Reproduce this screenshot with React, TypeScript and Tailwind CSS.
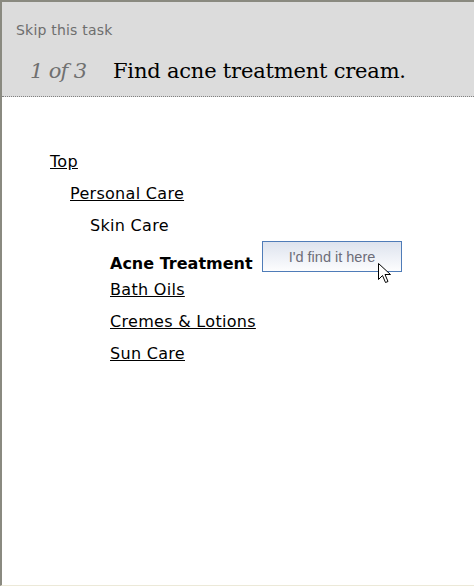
import React from 'react';

const verdana = { fontFamily: '"DejaVu Sans", Verdana, sans-serif' };

function Cursor() {
  return (
    <svg width="13" height="21" viewBox="0 0 13 21" className="absolute left-[115px] top-[21px]">
      <path d="M0.5 0.5 L0.5 16.5 L4.5 12.5 L7.5 19.5 L10 18.5 L7 11.5 L12.5 11.5 Z" fill="#fff" stroke="#000" strokeWidth="1" strokeLinejoin="miter" />
    </svg>
  );
}

export default function App() {
  return (
    <div className="w-[474px] h-[586px] overflow-hidden bg-white border-l-2 border-t-2 border-l-[#8a8a80] border-t-[#8a8a80] border-b border-b-[#ece9d8] box-border">
      <div className="h-[95px] bg-[#dcdcdc] border-b border-dotted border-[#808080] pl-[14px]">
        <div className="pt-[19px] text-[14px] leading-[18px] tracking-[0.2px] text-[#6e6e6e]" style={verdana}>
          Skip this task
        </div>
        <div className="flex items-baseline mt-[17px] font-['DejaVu_Serif',Georgia,serif]">
          <span className="ml-[14px] w-[83px] italic text-[21px] text-[#707070] tracking-[-0.7px]">1 of 3</span>
          <span className="text-[21px] text-black tracking-[-0.2px]">Find acne treatment cream.</span>
        </div>
      </div>

      <div className="pt-[49px] pl-[48px] text-[16px] tracking-[0.3px] text-black" style={verdana}>
        <div className="h-[32px] leading-[32px]"><a className="underline">Top</a></div>
        <div className="h-[32px] leading-[32px] pl-[20px]"><a className="underline">Personal Care</a></div>
        <div className="h-[32px] leading-[32px] pl-[40px]">Skin Care</div>
        <div className="relative h-[32px] leading-[32px] mt-[6px] pl-[60px]">
          <span className="font-bold tracking-[0px]">Acne Treatment</span>
          <div className="absolute left-[212px] top-[-7px] w-[140px] h-[31px] border border-[#4f7cb8] bg-gradient-to-b from-[#dde3ee] to-[#fdfdfe] flex items-center justify-center font-['Liberation_Sans',Arial,sans-serif] text-[14.5px] leading-[18px] tracking-normal text-[#6d6d78]">
            I'd find it here
            <Cursor />
          </div>
        </div>
        <div className="h-[32px] leading-[32px] pl-[60px] mt-[-6px]"><a className="underline">Bath Oils</a></div>
        <div className="h-[32px] leading-[32px] pl-[60px]"><a className="underline">Cremes &amp; Lotions</a></div>
        <div className="h-[32px] leading-[32px] pl-[60px]"><a className="underline">Sun Care</a></div>
      </div>
    </div>
  );
}
